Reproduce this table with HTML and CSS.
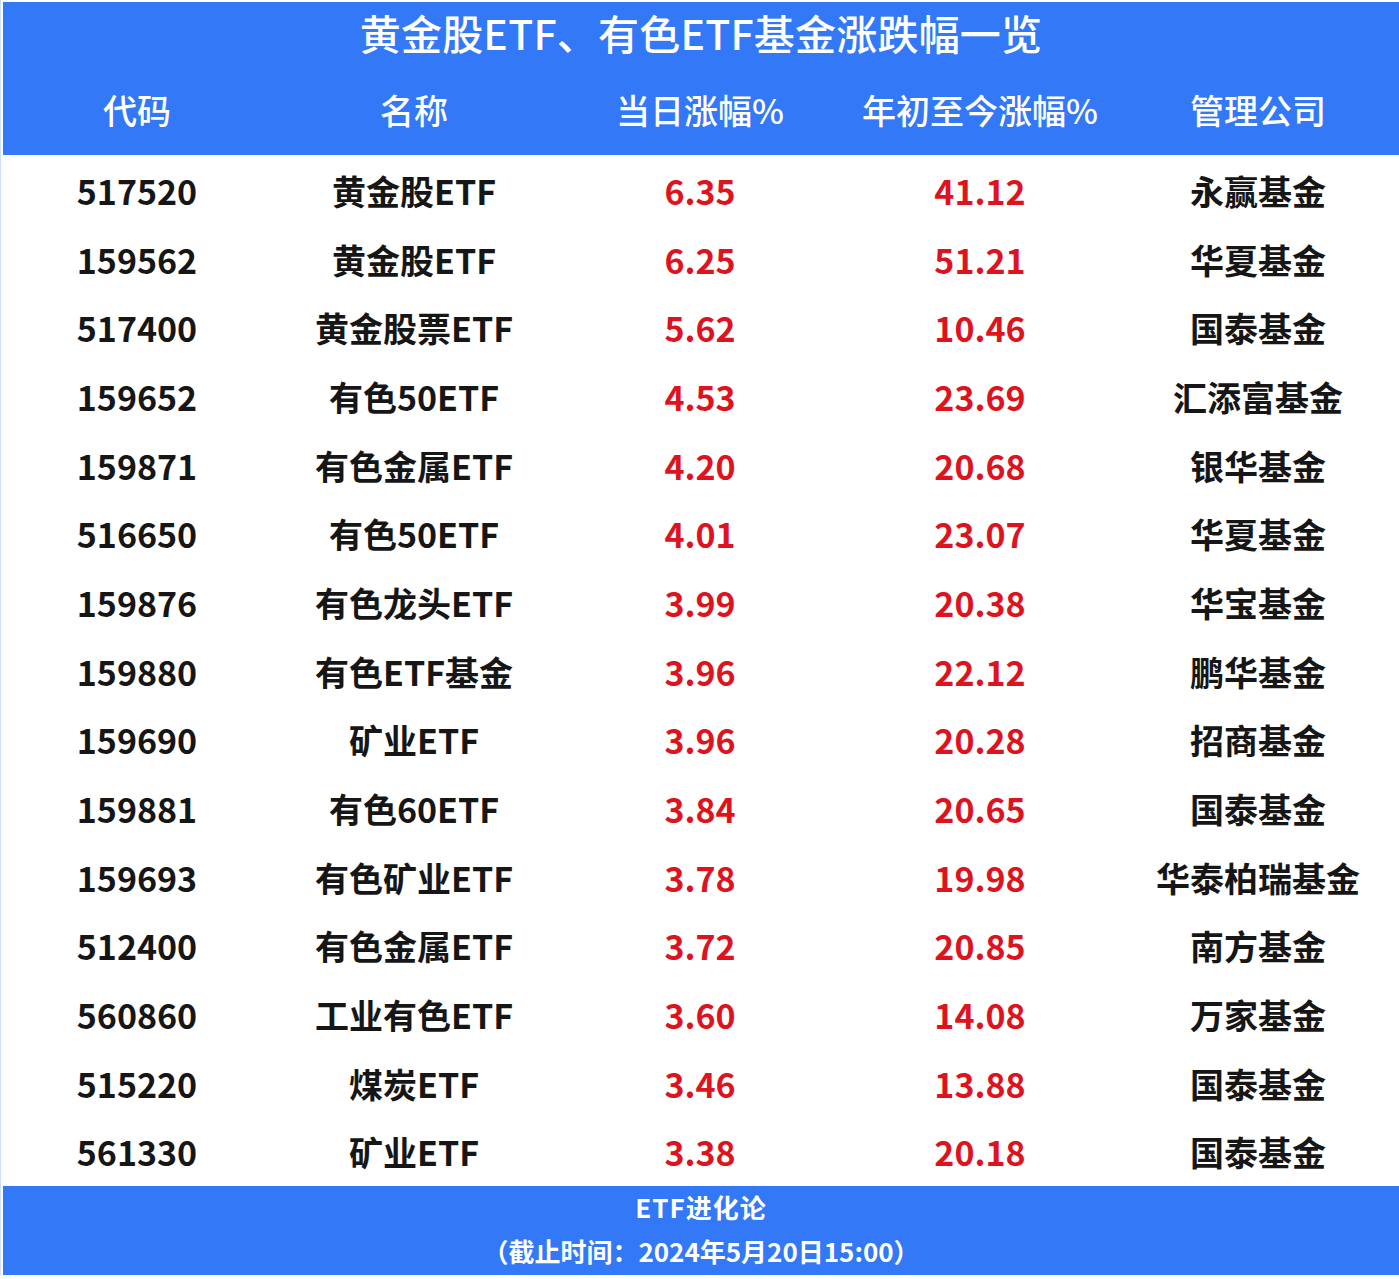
FILE: index.html
```html
<!DOCTYPE html>
<html lang="zh-CN">
<head>
<meta charset="utf-8">
<title>黄金股ETF、有色ETF基金涨跌幅一览</title>
<link rel="stylesheet" href="styles.css">
</head>
<body>
<div class="page">
  <div class="head">
    <div class="title">黄金股ETF、有色ETF基金涨跌幅一览</div>
    <div class="grid colhead">
      <div>代码</div><div>名称</div><div>当日涨幅%</div><div>年初至今涨幅%</div><div>管理公司</div>
    </div>
  </div>
  <div class="body">
    <div class="grid row"><div>517520</div><div>黄金股ETF</div><div class="red">6.35</div><div class="red">41.12</div><div>永赢基金</div></div>
    <div class="grid row"><div>159562</div><div>黄金股ETF</div><div class="red">6.25</div><div class="red">51.21</div><div>华夏基金</div></div>
    <div class="grid row"><div>517400</div><div>黄金股票ETF</div><div class="red">5.62</div><div class="red">10.46</div><div>国泰基金</div></div>
    <div class="grid row"><div>159652</div><div>有色50ETF</div><div class="red">4.53</div><div class="red">23.69</div><div>汇添富基金</div></div>
    <div class="grid row"><div>159871</div><div>有色金属ETF</div><div class="red">4.20</div><div class="red">20.68</div><div>银华基金</div></div>
    <div class="grid row"><div>516650</div><div>有色50ETF</div><div class="red">4.01</div><div class="red">23.07</div><div>华夏基金</div></div>
    <div class="grid row"><div>159876</div><div>有色龙头ETF</div><div class="red">3.99</div><div class="red">20.38</div><div>华宝基金</div></div>
    <div class="grid row"><div>159880</div><div>有色ETF基金</div><div class="red">3.96</div><div class="red">22.12</div><div>鹏华基金</div></div>
    <div class="grid row"><div>159690</div><div>矿业ETF</div><div class="red">3.96</div><div class="red">20.28</div><div>招商基金</div></div>
    <div class="grid row"><div>159881</div><div>有色60ETF</div><div class="red">3.84</div><div class="red">20.65</div><div>国泰基金</div></div>
    <div class="grid row"><div>159693</div><div>有色矿业ETF</div><div class="red">3.78</div><div class="red">19.98</div><div>华泰柏瑞基金</div></div>
    <div class="grid row"><div>512400</div><div>有色金属ETF</div><div class="red">3.72</div><div class="red">20.85</div><div>南方基金</div></div>
    <div class="grid row"><div>560860</div><div>工业有色ETF</div><div class="red">3.60</div><div class="red">14.08</div><div>万家基金</div></div>
    <div class="grid row"><div>515220</div><div>煤炭ETF</div><div class="red">3.46</div><div class="red">13.88</div><div>国泰基金</div></div>
    <div class="grid row"><div>561330</div><div>矿业ETF</div><div class="red">3.38</div><div class="red">20.18</div><div>国泰基金</div></div>
  </div>
  <div class="foot">
    <div class="src">ETF进化论</div>
    <div class="time">（截止时间：2024年5月20日15:00）</div>
  </div>
</div>
</body>
</html>
```
FILE: styles.css
```css
html, body {
  margin: 0;
  padding: 0;
  background: #ffffff;
}
body {
  font-family: "Noto Sans CJK SC", "Noto Sans", sans-serif;
  font-weight: 700;
  color: #161616;
}
.page {
  width: 1399px;
  padding: 2px 0 0 2px;
  box-sizing: border-box;
  border-left: 1px solid #cfe0ff;
}
.head {
  background: #3378f7;
  color: #ffffff;
  height: 153px;
  display: flex;
  flex-direction: column;
}
.title {
  height: 60px;
  display: flex;
  align-items: center;
  justify-content: center;
  font-size: 41px;
  font-weight: 500;
  letter-spacing: 0.2px;
}
.grid {
  display: grid;
  grid-template-columns: 268px 286px 286px 274px 1fr;
}
.grid > div {
  display: flex;
  align-items: center;
  justify-content: center;
  white-space: nowrap;
}
.colhead {
  flex: 1;
  font-size: 34px;
  font-weight: 500;
  padding-top: 2px;
}
.body {
  padding-top: 1px;
}
.row {
  height: 68.7px;
  font-size: 34px;
  font-weight: 700;
}
.red {
  color: #dd1420;
}
.foot {
  background: #3378f7;
  color: #ffffff;
  height: 89px;
  box-sizing: border-box;
  padding-bottom: 4px;
  display: flex;
  flex-direction: column;
  align-items: center;
  justify-content: center;
  font-size: 26px;
  font-weight: 700;
  line-height: 44px;
}
.src {
  letter-spacing: 1px;
}
```
